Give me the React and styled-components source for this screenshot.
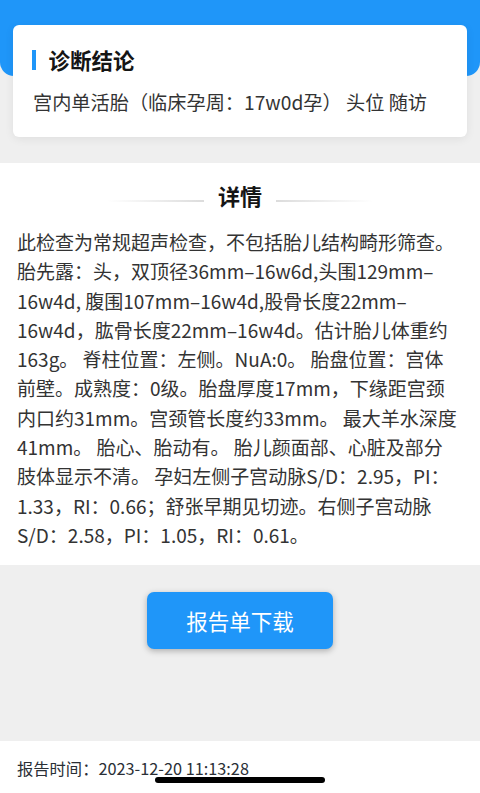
import React from "react";
import styled, { createGlobalStyle } from "styled-components";

const Global = createGlobalStyle`
  html, body { margin: 0; padding: 0; }
  body {
    background: #efefef;
    font-family: "Noto Sans CJK SC", "Noto Sans", sans-serif;
    color: #333;
  }
`;

const Page = styled.div`
  width: 480px;
  min-height: 793px;
  display: flex;
  flex-direction: column;
  background: #efefef;
  overflow: hidden;
  position: relative;
`;

const Band = styled.div`
  height: 76px;
  background: #1f96f9;
  border-radius: 0 0 14px 14px;
`;

const Card = styled.section`
  position: relative;
  margin: -51px 13px 0;
  background: #fff;
  border-radius: 6px;
  box-shadow: 0 2px 10px rgba(0, 0, 0, 0.07);
  padding: 21px 19px 21px 19px;
  display: flex;
  flex-direction: column;
  gap: 14px;
`;

const CardTitle = styled.h2`
  margin: 0;
  display: flex;
  align-items: center;
  gap: 13px;
  font-size: 21.5px;
  line-height: 28px;
  font-weight: 700;
  color: #151515;
  &::before {
    content: "";
    width: 3.5px;
    height: 20px;
    background: #1f96f9;
  }
`;

const CardText = styled.p`
  margin: 0 0 0 1px;
  font-size: 19.2px;
  line-height: 28px;
  color: #333;
  white-space: nowrap;
`;

const Detail = styled.section`
  margin-top: 26px;
  background: #fff;
  padding: 17px 17px 16px;
`;

const DetailHead = styled.div`
  display: flex;
  align-items: center;
  justify-content: center;
  gap: 14px;
  height: 30px;
  margin-bottom: 17px;
`;

const Rule = styled.span`
  width: 97px;
  height: 2px;
  margin-top: 12px;
  background: linear-gradient(
    ${(p) => (p.$side === "left" ? "to right" : "to left")},
    rgba(220, 220, 220, 0),
    #dcdcdc
  );
`;

const DetailTitle = styled.h3`
  margin: 0;
  font-size: 22px;
  line-height: 30px;
  font-weight: 700;
  color: #151515;
`;

const Body = styled.div`
  font-size: 19px;
  line-height: 29.3px;
  color: #333;
`;

const Line = styled.div`
  white-space: nowrap;
`;

const Actions = styled.div`
  display: flex;
  justify-content: center;
  padding: 27px 0 92px;
`;

const DownloadButton = styled.button`
  width: 186px;
  height: 57px;
  border: none;
  border-radius: 7px;
  background: #1f96f9;
  color: #fff;
  font-family: inherit;
  font-size: 21.5px;
  box-shadow: 0 2px 6px rgba(0, 0, 0, 0.28);
`;

const Footer = styled.footer`
  flex: 1;
  background: #fff;
  padding: 16px 17px 13px;
  font-size: 16.3px;
  line-height: 22px;
  color: #2a2f36;
`;

const HomeIndicator = styled.div`
  position: absolute;
  left: 50%;
  bottom: 10px;
  width: 170px;
  height: 6px;
  margin-left: -85px;
  border-radius: 3px;
  background: #000;
`;

const lines = [
  "此检查为常规超声检查，不包括胎儿结构畸形筛查。",
  "胎先露：头，双顶径36mm–16w6d,头围129mm–",
  "16w4d, 腹围107mm–16w4d,股骨长度22mm–",
  "16w4d，肱骨长度22mm–16w4d。估计胎儿体重约",
  "163g。 脊柱位置：左侧。NuA:0。 胎盘位置：宫体",
  "前壁。成熟度：0级。胎盘厚度17mm，下缘距宫颈",
  "内口约31mm。宫颈管长度约33mm。 最大羊水深度",
  "41mm。 胎心、胎动有。 胎儿颜面部、心脏及部分",
  "肢体显示不清。 孕妇左侧子宫动脉S/D：2.95，PI：",
  "1.33，RI：0.66；舒张早期见切迹。右侧子宫动脉",
  "S/D：2.58，PI：1.05，RI：0.61。",
];

export default function App() {
  return (
    <Page>
      <Global />
      <Band />
      <Card>
        <CardTitle>诊断结论</CardTitle>
        <CardText>宫内单活胎（临床孕周：17w0d孕） 头位 随访</CardText>
      </Card>
      <Detail>
        <DetailHead>
          <Rule $side="left" />
          <DetailTitle>详情</DetailTitle>
          <Rule $side="right" />
        </DetailHead>
        <Body>
          {lines.map((l, i) => (
            <Line key={i}>{l}</Line>
          ))}
        </Body>
      </Detail>
      <Actions>
        <DownloadButton>报告单下载</DownloadButton>
      </Actions>
      <Footer>报告时间：2023-12-20 11:13:28</Footer>
      <HomeIndicator />
    </Page>
  );
}
